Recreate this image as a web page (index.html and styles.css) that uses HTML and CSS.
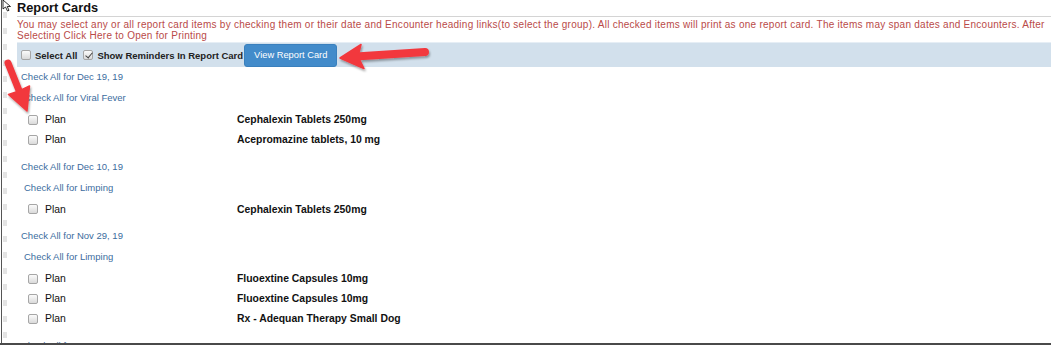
FILE: index.html
```html
<!DOCTYPE html>
<html lang="en">
<head>
  <meta charset="UTF-8" />
  <title>Report Cards</title>
  <link rel="stylesheet" href="styles.css">
</head>
<body>
  <div class="frame">
    <div class="gutter"></div>
    <div class="page">
      <h1 class="title">Report Cards</h1>
      <p class="note">You may select any or all report card items by checking them or their date and Encounter heading links(to select the group). All checked items will print as one report card. The items may span dates and Encounters. After Selecting Click Here to Open for Printing</p>

      <div class="toolbar">
        <label class="opt"><input type="checkbox" /> Select All</label>
        <label class="opt"><input type="checkbox" checked /> Show Reminders In Report Card</label>
        <button class="btn">View Report Card</button>
      </div>

      <div class="group first">
        <a class="date-link" href="#">Check All for Dec 19, 19</a>
        <a class="enc-link" href="#">Check All for Viral Fever</a>
        <div class="items">
          <label class="item"><input type="checkbox" /><span class="kind">Plan</span><span class="name">Cephalexin Tablets 250mg</span></label>
          <label class="item"><input type="checkbox" /><span class="kind">Plan</span><span class="name">Acepromazine tablets, 10 mg</span></label>
        </div>
      </div>

      <div class="group">
        <a class="date-link" href="#">Check All for Dec 10, 19</a>
        <a class="enc-link" href="#">Check All for Limping</a>
        <div class="items">
          <label class="item"><input type="checkbox" /><span class="kind">Plan</span><span class="name">Cephalexin Tablets 250mg</span></label>
        </div>
      </div>

      <div class="group">
        <a class="date-link" href="#">Check All for Nov 29, 19</a>
        <a class="enc-link" href="#">Check All for Limping</a>
        <div class="items">
          <label class="item"><input type="checkbox" /><span class="kind">Plan</span><span class="name">Fluoextine Capsules 10mg</span></label>
          <label class="item"><input type="checkbox" /><span class="kind">Plan</span><span class="name">Fluoextine Capsules 10mg</span></label>
          <label class="item"><input type="checkbox" /><span class="kind">Plan</span><span class="name">Rx - Adequan Therapy Small Dog</span></label>
        </div>
      </div>

      <div class="group">
        <a class="date-link" href="#">Check All for Aug 21, 19</a>
      </div>
    </div>

    <!-- annotation arrows drawn over the screenshot -->
    <svg class="marks" width="1051" height="346" viewBox="0 0 1051 346">
      <defs>
        <filter id="shade" x="-20%" y="-20%" width="140%" height="160%">
          <feDropShadow dx="1" dy="2" stdDeviation="1.2" flood-color="#000" flood-opacity="0.35" />
        </filter>
      </defs>
      <g fill="#f2383e" stroke="#f2383e" filter="url(#shade)">
        <line x1="425" y1="52" x2="356" y2="56.5" stroke-width="8" stroke-linecap="round" />
        <polygon points="340,58 361,44.5 358,56.5 364,68.5" stroke-width="1.5" stroke-linejoin="round" />
        <line x1="8" y1="63" x2="20" y2="93" stroke-width="7" stroke-linecap="round" />
        <polygon points="27,111 29.5,86 19,91 8.5,94.5" stroke-width="1.5" stroke-linejoin="round" />
      </g>
      <polygon class="cursor" points="3,0 3,9 5.5,7 7.5,11 9,10.3 7.2,6.5 10.5,6.5 3,0" />
    </svg>
  </div>
</body>
</html>
```

FILE: styles.css
```css
body {
  margin: 0;
  background: #fff;
  font-family: "Liberation Sans", Arial, sans-serif;
  color: #000;
  overflow: hidden;
}
input[type="checkbox"] {
  appearance: none;
  -webkit-appearance: none;
  position: relative;
  width: 10px;
  height: 10px;
  margin: 0;
  border: 1px solid #a6a6a6;
  border-radius: 2px;
  background: linear-gradient(#fbfbfb, #dadada);
  box-sizing: border-box;
  flex: none;
}
input[type="checkbox"]:checked::after {
  content: "";
  position: absolute;
  left: 2.5px;
  top: 0px;
  width: 3px;
  height: 6px;
  border: solid #444;
  border-width: 0 1.5px 1.5px 0;
  transform: rotate(40deg);
}

.frame {
  position: relative;
  display: flex;
  height: 343px;
  overflow: hidden;
  border-bottom: 2px solid #4a4a4a;
}
.gutter {
  flex: 0 0 8px;
  background:
    linear-gradient(#555, #555) 1px 0 / 1px 100% no-repeat,
    repeating-linear-gradient(to bottom, #e4e4e4 0 6px, transparent 6px 16px) 3px 12px / 4px 100% no-repeat;
}
.page {
  flex: 1;
  padding-left: 9px;
  min-width: 0;
}
.title {
  margin: 0;
  font-size: 12.8px;
  line-height: 16px;
  font-weight: bold;
  color: #111;
  border-bottom: 1px solid #d4d4d4;
}
.note {
  margin: 2px 0 0;
  font-size: 10px;
  line-height: 11px;
  letter-spacing: 0.26px;
  color: #b94a48;
}
.toolbar {
  display: flex;
  align-items: center;
  height: 25px;
  margin-top: 1px;
  padding-left: 4px;
  background: #d2e0ec;
  border-top: 1px solid #e6eef5;
  box-sizing: border-box;
}
.opt {
  display: flex;
  align-items: center;
  font-size: 9.5px;
  font-weight: bold;
  color: #222;
  margin-right: 6px;
}
.opt:last-of-type {
  margin-right: 1px;
}
.opt input {
  margin: 0 4px 0 0;
}
.btn {
  height: 23px;
  padding: 0 9px;
  font-family: "Liberation Sans", Arial, sans-serif;
  font-size: 9.3px;
  color: #fff;
  background: #428bca;
  border: 1px solid #3a80bd;
  border-radius: 3px;
}

.group {
  padding-left: 4px;
}
.date-link,
.enc-link {
  display: block;
  font-size: 9.5px;
  line-height: 11px;
  color: #3b6c9e;
  text-decoration: none;
}
.date-link {
  margin-top: 11px;
}
.group.first .date-link {
  margin-top: 4px;
}
.enc-link {
  margin-top: 10px;
  padding-left: 3px;
}
.items {
  margin-top: 6.5px;
  padding-left: 7px;
}
.item {
  display: flex;
  align-items: center;
  height: 20px;
  font-size: 10.4px;
}
.kind {
  width: 192px;
  margin-left: 7px;
  color: #111;
}
.name {
  font-weight: bold;
  color: #111;
}

.marks {
  position: absolute;
  left: 0;
  top: 0;
  pointer-events: none;
}
.cursor {
  fill: #fff;
  stroke: #000;
  stroke-width: 0.8;
}
```
